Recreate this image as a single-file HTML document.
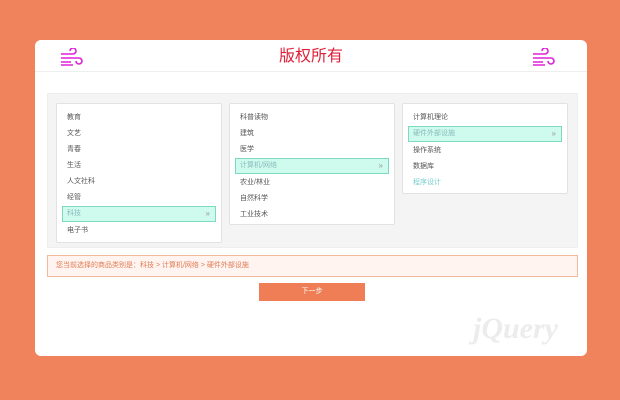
<!DOCTYPE html><html><head><meta charset="utf-8"><style>
body{margin:0;width:620px;height:400px;background:#f0825c;font-family:"Liberation Sans","Noto Sans CJK SC",sans-serif;position:relative;overflow:hidden}
.card{position:absolute;left:35px;top:40px;width:552px;height:316px;background:#fff;border-radius:6px}
.hd{height:31px;border-bottom:1px solid #eee;text-align:center;font-size:16px;color:#e0203a;line-height:33px}
.ic{position:absolute;top:8px}
.panel{position:absolute;left:12px;top:53px;width:531px;height:155px;background:#f4f4f4;border:1px solid #eee;box-sizing:border-box}
.col{position:absolute;background:#fff;border:1px solid #e2e2e2;border-radius:2px;box-sizing:border-box}
.it{height:16px;line-height:16px;font-size:7px;color:#555;padding-left:10px;position:relative}
.on{background:#cffbef;border:1px solid #7fd8c0;color:#8bb;margin:0 5px;padding-left:4px;height:14px;line-height:14px}
.on:after{content:"»";position:absolute;right:5px;color:#999;font-size:8px}
.msg{position:absolute;left:12px;top:215px;width:531px;height:22px;background:#fff4ef;border:1px solid #f3b99c;box-sizing:border-box;font-size:7px;color:#e27a55;line-height:20px;padding-left:8px}
.btn{position:absolute;left:224px;top:243px;width:106px;height:18px;background:#ef7e56;color:#fff;font-size:7px;line-height:18px;text-align:center}
</style></head><body><div class="card">
<div class="hd">版权所有</div>
<svg class="ic" style="left:24px" width="24" height="20" viewBox="0 0 24 20" fill="none" stroke="#e020d8" stroke-width="1.6"><path d="M2 6h12a3 3 0 1 0-3-3M2 10h18a3 3 0 1 1-3 3M2 14h10M2 17h12"/></svg>
<svg class="ic" style="left:496px" width="24" height="20" viewBox="0 0 24 20" fill="none" stroke="#e020d8" stroke-width="1.6"><path d="M2 6h12a3 3 0 1 0-3-3M2 10h18a3 3 0 1 1-3 3M2 14h10M2 17h12"/></svg>
<div class="panel">
<div class="col" style="left:8px;top:9px;width:166px;height:140px;padding-top:6px">
<div class="it">教育</div><div class="it">文艺</div><div class="it">青春</div><div class="it">生活</div><div class="it">人文社科</div><div class="it">经管</div><div class="it on">科技</div><div class="it" style="margin-top:1px">电子书</div></div>
<div class="col" style="left:181px;top:9px;width:166px;height:122px;padding-top:6px">
<div class="it">科普读物</div><div class="it">建筑</div><div class="it">医学</div><div class="it on">计算机/网络</div><div class="it" style="margin-top:1px">农业/林业</div><div class="it">自然科学</div><div class="it">工业技术</div></div>
<div class="col" style="left:354px;top:9px;width:166px;height:91px;padding-top:6px">
<div class="it">计算机理论</div><div class="it on">硬件外部设施</div><div class="it" style="margin-top:1px">操作系统</div><div class="it">数据库</div><div class="it" style="color:#7cc">程序设计</div></div>
</div>
<div class="msg">您当前选择的商品类别是：科技 &gt; 计算机/网络 &gt; 硬件外部设施</div>
<div class="btn">下一步</div>
<div style="position:absolute;left:438px;top:272px;font:italic bold 30px 'Liberation Serif',serif;color:#ececec">jQuery</div>
</div></body></html>
